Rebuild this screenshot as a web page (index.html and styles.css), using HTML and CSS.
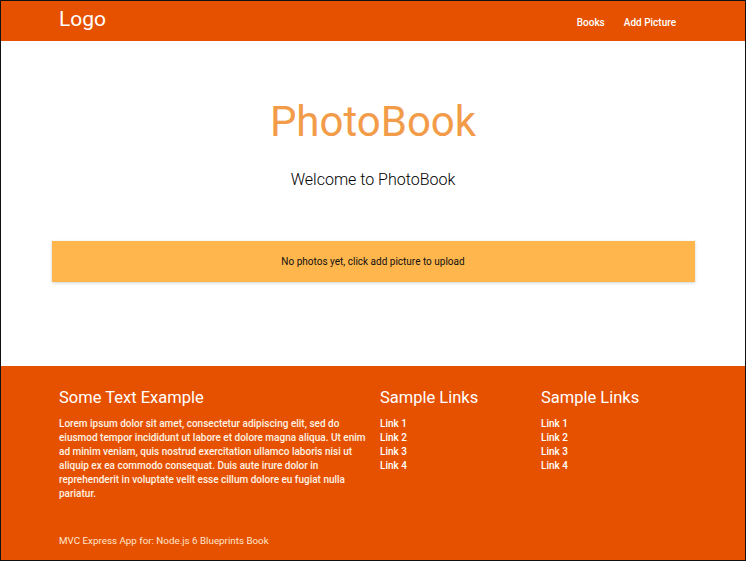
FILE: index.html
```html
<!DOCTYPE html>
<html>
<head>
<meta charset="utf-8">
<link rel="stylesheet" href="styles.css">
</head>
<body>
<div class="frame">
  <nav class="nav">
    <a class="logo">Logo</a>
    <ul class="menu">
      <li><a>Books</a></li>
      <li><a>Add Picture</a></li>
    </ul>
  </nav>
  <main class="main">
    <h1 class="title">PhotoBook</h1>
    <p class="welcome">Welcome to PhotoBook</p>
    <div class="alert">No photos yet, click add picture to upload</div>
  </main>
  <footer class="footer">
    <div class="cols">
      <div class="col">
        <h5 class="fh">Some Text Example</h5>
        <p class="lorem">Lorem ipsum dolor sit amet, consectetur adipiscing elit, sed do eiusmod tempor incididunt ut labore et dolore magna aliqua. Ut enim ad minim veniam, quis nostrud exercitation ullamco laboris nisi ut aliquip ex ea commodo consequat. Duis aute irure dolor in reprehenderit in voluptate velit esse cillum dolore eu fugiat nulla pariatur.</p>
      </div>
      <div class="col">
        <h5 class="fh">Sample Links</h5>
        <ul class="links">
          <li>Link 1</li><li>Link 2</li><li>Link 3</li><li>Link 4</li>
        </ul>
      </div>
      <div class="col">
        <h5 class="fh">Sample Links</h5>
        <ul class="links">
          <li>Link 1</li><li>Link 2</li><li>Link 3</li><li>Link 4</li>
        </ul>
      </div>
    </div>
    <div class="copy">MVC Express App for: Node.js 6 Blueprints Book</div>
  </footer>
</div>
</body>
</html>
```
FILE: styles.css
```css
* { box-sizing: border-box; }
html, body { margin: 0; padding: 0; background: #fff; }
body { font-family: Roboto, "Noto Sans", sans-serif; }
.frame {
  width: 746px;
  height: 561px;
  border: 1px solid #111;
  display: flex;
  flex-direction: column;
  overflow: hidden;
}
.nav {
  height: 40px;
  flex: none;
  background: #e65100;
  display: flex;
  align-items: center;
  justify-content: space-between;
  padding: 0 69px 0 58px;
}
.logo {
  color: #fff;
  font-size: 21px;
  font-weight: 400;
  line-height: 1;
  padding-bottom: 3px;
}
.menu {
  list-style: none;
  margin: 0;
  padding: 0;
  display: flex;
  gap: 19px;
  padding-bottom: 2px;
}
.menu a { color: #fff; font-size: 10px; font-weight: 500; }
.main {
  height: 325px;
  flex: none;
  display: flex;
  flex-direction: column;
  align-items: center;
}
.title {
  margin: 56px 0 0 0;
  font-size: 42px;
  font-weight: 400;
  line-height: 50px;
  color: #f29b48;
}
.welcome {
  margin: 23px 0 0 0;
  font-size: 16px;
  font-weight: 300;
  line-height: 20px;
  color: #000;
}
.alert {
  margin-top: 51px;
  width: 643px;
  height: 41px;
  background: #ffb74d;
  box-shadow: 0 1px 3px rgba(0,0,0,0.18);
  display: flex;
  align-items: center;
  justify-content: center;
  font-size: 10px;
  color: #111;
}
.footer {
  flex: 1;
  background: #e65100;
  color: #fff;
  display: flex;
  flex-direction: column;
}
.cols {
  display: grid;
  grid-template-columns: 321px 161px 161px;
  padding: 23px 0 0 58px;
}
.fh {
  margin: 0;
  font-size: 16.5px;
  font-weight: 400;
  line-height: 18px;
}
.lorem {
  margin: 10px 0 0 0;
  width: 310px;
  font-size: 10px;
  font-weight: 500;
  line-height: 14px;
  color: #fff3e6;
}
.links {
  list-style: none;
  margin: 10px 0 0 0;
  padding: 0;
  font-size: 10px;
  font-weight: 500;
  line-height: 14px;
}
.copy {
  margin-top: auto;
  padding: 0 0 14px 58px;
  font-size: 9.8px;
  color: #ffe6cc;
}
```
